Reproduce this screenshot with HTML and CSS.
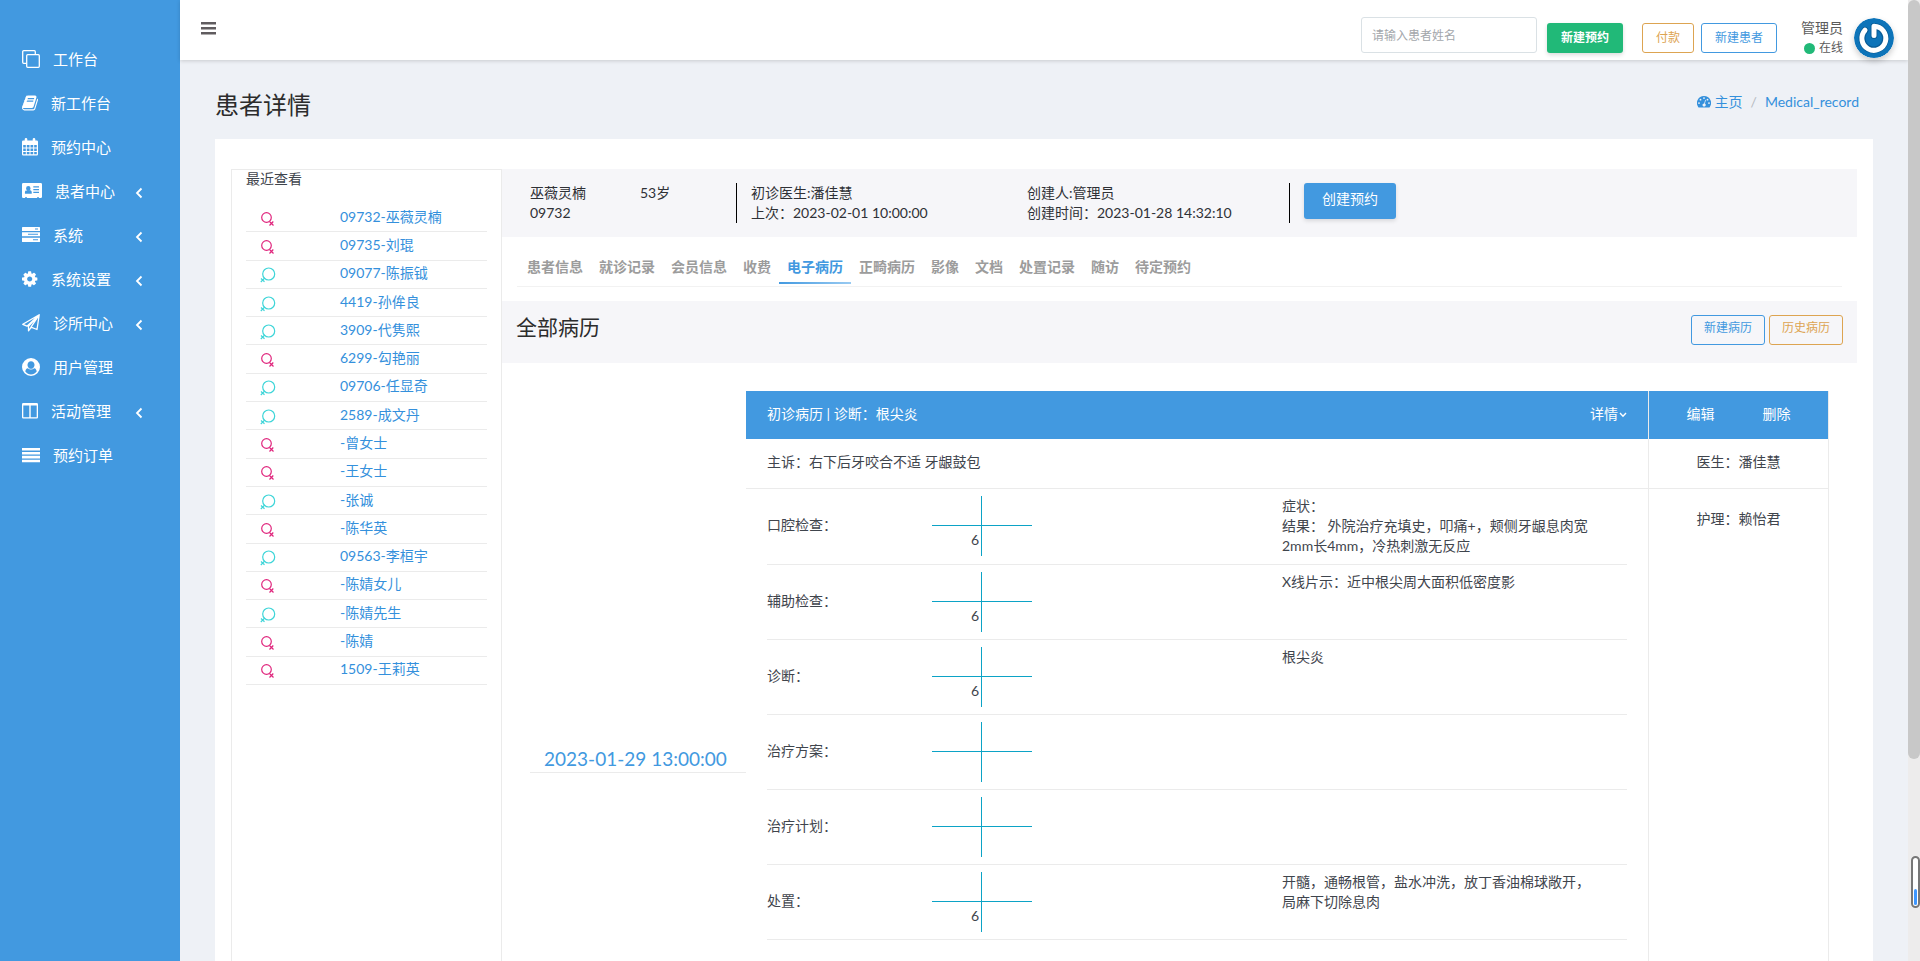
FILE: index.html
```html
<!DOCTYPE html>
<html lang="zh-CN">
<head>
<meta charset="utf-8">
<title>患者详情</title>
<link rel="stylesheet" href="styles.css">
</head>
<body>
<svg class="defs" aria-hidden="true">
  <symbol id="female" viewBox="0 0 16 16"><circle cx="6.500" cy="6.500" r="4.800"/><path d="M9.500 10.500l4 4M13.300 10.500l-3.800 4"/></symbol>
  <symbol id="male" viewBox="0 0 16 16"><circle cx="8.700" cy="7" r="6"/><path d="M4.800 10.800L.8 15M1 11.500l3.500 3.300"/></symbol>
  <symbol id="left" viewBox="0 0 8 12"><path d="M6.500 1.500L2 6l4.500 4.500"/></symbol>
</svg>
<div class="app">
  <nav class="sidebar">
    <a href="#" class="nav-item"><svg class="ico w18 line" viewBox="0 0 18 18"><rect x="4.700" y="4.700" width="12.600" height="12.600" rx="1"/><path d="M4.500 13.300H1.700a1 1 0 0 1-1-1V1.700a1 1 0 0 1 1-1h10.600a1 1 0 0 1 1 1v2.800"/></svg>工作台</a>
    <a href="#" class="nav-item"><svg class="ico w16" viewBox="64 128 1664 1536"><path d="M1703 478q40 57 18 129l-275 906q-19 64-76.500 107.500t-122.500 43.500h-923q-77 0-148.500-53.500t-99.500-131.500q-24-67-2-127 0-4 3-27t4-37q1-8-3-21.500t-3-19.500q2-11 8-21t16.500-23.500 16.500-23.500q23-38 45-91.500t30-91.500q3-10 .5-30t-.5-28q3-11 17-28t17-23q21-36 42-92t25-90q1-9-2.500-32t.5-28q4-13 22-30.500t22-22.500q19-26 42.500-84.500t27.500-96.500q1-8-3-25.500t-2-26.500q2-8 9-18t18-23 17-21q8-12 16.500-30.500t15-35 16-36 19.500-32 26.500-23.500 36-11.500 47.500 5.500l-1 3q38-9 51-9h761q74 0 114 56t18 130l-274 906q-36 119-71.500 153.500t-128.500 34.500h-869q-27 0-38 15-11 16-1 43 24 70 144 70h923q29 0 56-15.500t35-41.500l300-987q7-22 5-57 38 15 59 43zm-1064 2q-4 13 2 22.500t20 9.500h608q13 0 25.500-9.500t16.500-22.500l21-64q4-13-2-22.500t-20-9.500h-608q-13 0-25.500 9.500t-16.500 22.500zm-83 256q-4 13 2 22.500t20 9.500h608q13 0 25.500-9.500t16.500-22.500l21-64q4-13-2-22.500t-20-9.500h-608q-13 0-25.500 9.500t-16.500 22.500z"/></svg>新工作台</a>
    <a href="#" class="nav-item"><svg class="ico w16" viewBox="0 0 16 18"><path fill-rule="evenodd" d="M1.200 2.500h1.500V1.300a1.300 1.300 0 0 1 2.600 0v1.200h5.400V1.300a1.300 1.300 0 0 1 2.600 0v1.200h1.500A1.200 1.200 0 0 1 16 3.700v12.600a1.200 1.200 0 0 1-1.200 1.200H1.200A1.200 1.200 0 0 1 0 16.300V3.700a1.200 1.200 0 0 1 1.200-1.200zM1.200 7v2.500h2.600V7zM4.800 7v2.500h2.700V7zM8.500 7v2.500h2.700V7zM12.200 7v2.500h2.600V7zM1.200 10.500V13h2.600v-2.500zM4.800 10.500V13h2.700v-2.500zM8.500 10.500V13h2.700v-2.500zM12.200 10.500V13h2.600v-2.500zM1.200 14v2.300h2.600V14zM4.800 14v2.300h2.700V14zM8.500 14v2.300h2.700V14zM12.200 14v2.300h2.600V14z"/></svg>预约中心</a>
    <a href="#" class="nav-item"><svg class="ico w20" viewBox="0 0 20 16"><path fill-rule="evenodd" d="M1.300 0h17.400A1.300 1.300 0 0 1 20 1.300v12.400a1.300 1.300 0 0 1-1.300 1.300H17v-.8h-2v.8H5v-.8H3v.8H1.300A1.300 1.300 0 0 1 0 13.700V1.300A1.300 1.300 0 0 1 1.300 0zM6.300 3a2.200 2.400 0 1 0 0 4.900 2.200 2.400 0 1 0 0-4.900zM3 10.800h6.700c.4-2-.3-3.400-1.600-3.600a2.800 2.800 0 0 1-3.500 0C3.300 7.400 2.600 8.800 3 10.800zM11.300 3.300v1.200H17V3.300zM11.300 6v1.200H17V6zM11.300 8.800V10H17V8.800z"/></svg>患者中心<svg class="chev"><use href="#left"/></svg></a>
    <a href="#" class="nav-item"><svg class="ico w18" viewBox="0 0 18 16"><path fill-rule="evenodd" d="M.7 0h16.600a.7.7 0 0 1 .7.7v3.200H0V.7A.7.7 0 0 1 .7 0zM13 1.500v1h3v-1zM0 5.300h18v4H0zm6 1.500v1h10v-1zM0 10.700h18v3.700a.7.700 0 0 1-.7.700H.7a.7.700 0 0 1-.7-.7zm11 1.600v1h5v-1z"/></svg>系统<svg class="chev"><use href="#left"/></svg></a>
    <a href="#" class="nav-item"><svg class="ico w16" viewBox="128 128 1600 1536"><path d="M1152 896q0-106-75-181t-181-75-181 75-75 181 75 181 181 75 181-75 75-181zm512-109v222q0 12-8 23t-20 13l-185 28q-19 54-39 91 35 50 107 138 10 12 10 25t-9 23q-27 37-99 108t-94 71q-12 0-26-9l-138-108q-44 23-91 38-16 136-29 186-7 28-36 28h-222q-14 0-24.500-8.500t-11.500-21.500l-28-184q-49-16-90-37l-141 107q-10 9-25 9-14 0-25-11-126-114-165-168-7-10-7-23 0-12 8-23 15-21 51-66.500t54-70.500q-27-50-41-99l-183-27q-13-2-21-12.500t-8-23.500v-222q0-12 8-23t19-13l186-28q14-46 39-92-40-57-107-138-10-12-10-24 0-10 9-23 26-36 98.500-107.500t94.500-71.500q13 0 26 10l138 107q44-23 91-38 16-136 29-186 7-28 36-28h222q14 0 24.500 8.500t11.500 21.500l28 184q49 16 90 37l142-107q9-9 24-9 13 0 25 10 129 119 165 170 7 8 7 22 0 12-8 23-15 21-51 66.500t-54 70.500q26 50 41 98l183 28q13 2 21 12.500t8 23.500z"/></svg>系统设置<svg class="chev"><use href="#left"/></svg></a>
    <a href="#" class="nav-item"><svg class="ico w18 line" viewBox="0 0 18 18"><path d="M17.200.8L.8 10.300l4.200 1.900L17.200.8 15 15.500l-6-2.400L17.200.8 6.500 12.300v4.500l2.500-3.300"/></svg>诊所中心<svg class="chev"><use href="#left"/></svg></a>
    <a href="#" class="nav-item"><svg class="ico w18" viewBox="0 0 18 18"><path fill-rule="evenodd" d="M9 0a9 9 0 1 0 0 18A9 9 0 0 0 9 0zm0 3.200c2 0 3.500 1.500 3.500 3.600 0 1.300-.5 2.400-1.300 3.100-1.300 1.200-3.100 1.200-4.400 0-.8-.7-1.300-1.800-1.300-3.100 0-2.100 1.500-3.600 3.500-3.600zm-5.700 10.400c.3-1.900 1.100-3.100 2.500-3.300 1.900 1.700 4.500 1.700 6.400 0 1.400.2 2.200 1.400 2.500 3.300-3 4-8.400 4-11.400 0z"/></svg>用户管理</a>
    <a href="#" class="nav-item"><svg class="ico w16" viewBox="0 0 16 16"><path fill-rule="evenodd" d="M1.300 0h13.400A1.300 1.300 0 0 1 16 1.300v12.900a1.300 1.300 0 0 1-1.300 1.300H1.300A1.300 1.300 0 0 1 0 14.200V1.300A1.300 1.300 0 0 1 1.300 0zM1.300 2.500v11.700h6V2.500zM8.700 2.500v11.700h6V2.500z"/></svg>活动管理<svg class="chev"><use href="#left"/></svg></a>
    <a href="#" class="nav-item"><svg class="ico w18" viewBox="0 0 18 16"><path d="M0 1h18v2.600H0zM0 4.900h18v2.600H0zM0 8.800h18v2.600H0zM0 12.700h18v2.600H0z"/></svg>预约订单</a>
  </nav>

  <div class="main">
    <header class="topbar">
      <button class="menu" aria-label="菜单"><svg width="15" height="13" viewBox="0 0 15 13"><path d="M0 0h15v2.400H0zM0 5h15v2.400H0zM0 10h15v2.400H0z"/></svg></button>
      <div class="actions">
        <input class="search" type="text" placeholder="请输入患者姓名" aria-label="请输入患者姓名">
        <button class="btn green">新建预约</button>
        <button class="btn outline-orange pay">付款</button>
        <button class="btn outline-blue">新建患者</button>
      </div>
      <div class="user">
        <div class="user-text"><span class="user-name">管理员</span><span class="status"><i class="dot"></i>在线</span></div>
        <svg class="avatar" viewBox="0 0 40 40"><circle cx="20" cy="20" r="20" fill="#0d74b9"/><path d="M20 17.500V8.500A11.700 11.700 0 1 1 11 12.500" fill="none" stroke="#0a5d97" stroke-width="7" stroke-linecap="round" stroke-linejoin="round"/><path d="M20 17.500V8.300A12 12 0 1 1 11 12.200" fill="none" stroke="#fff" stroke-width="5" stroke-linecap="round" stroke-linejoin="round"/></svg>
      </div>
    </header>

    <div class="page-head">
      <h1>患者详情</h1>
      <div class="crumbs">
        <a href="#"><svg width="14" height="12" viewBox="0 0 14 12"><path fill-rule="evenodd" d="M7 0a7 7 0 0 0-5.800 11q.3.500.8.500h10q.5 0 .8-.5A7 7 0 0 0 7 0zM2 6.200a.9.900 0 1 1 0 1.800.9.900 0 0 1 0-1.800zM3.500 2.800a.9.900 0 1 1 0 1.800.9.900 0 0 1 0-1.800zM7 1.200a.9.900 0 1 1 0 1.800.9.900 0 0 1 0-1.800zM10.500 2.800a.9.900 0 1 1 0 1.800.9.900 0 0 1 0-1.800zM12 6.200a.9.900 0 1 1 0 1.800.9.900 0 0 1 0-1.800zM8.200 3.800l.7.200-1 3.600a1.600 1.600 0 1 1-.7-.2z"/></svg> 主页</a>
        <span class="slash">/</span>
        <a href="#">Medical_record</a>
      </div>
    </div>

    <main class="card">
      <aside class="recent">
        <h2>最近查看</h2>
        <ul>
          <li><svg class="f"><use href="#female"/></svg><a href="#">09732-巫薇灵楠</a></li>
          <li><svg class="f"><use href="#female"/></svg><a href="#">09735-刘琨</a></li>
          <li><svg class="m"><use href="#male"/></svg><a href="#">09077-陈振钺</a></li>
          <li><svg class="m"><use href="#male"/></svg><a href="#">4419-孙侔良</a></li>
          <li><svg class="m"><use href="#male"/></svg><a href="#">3909-代隽熙</a></li>
          <li><svg class="f"><use href="#female"/></svg><a href="#">6299-勾艳丽</a></li>
          <li><svg class="m"><use href="#male"/></svg><a href="#">09706-任显奇</a></li>
          <li><svg class="m"><use href="#male"/></svg><a href="#">2589-成文丹</a></li>
          <li><svg class="f"><use href="#female"/></svg><a href="#">-曾女士</a></li>
          <li><svg class="f"><use href="#female"/></svg><a href="#">-王女士</a></li>
          <li><svg class="m"><use href="#male"/></svg><a href="#">-张诚</a></li>
          <li><svg class="f"><use href="#female"/></svg><a href="#">-陈华英</a></li>
          <li><svg class="m"><use href="#male"/></svg><a href="#">09563-李桓宇</a></li>
          <li><svg class="f"><use href="#female"/></svg><a href="#">-陈婧女儿</a></li>
          <li><svg class="m"><use href="#male"/></svg><a href="#">-陈婧先生</a></li>
          <li><svg class="f"><use href="#female"/></svg><a href="#">-陈婧</a></li>
          <li><svg class="f"><use href="#female"/></svg><a href="#">1509-王莉英</a></li>
        </ul>
      </aside>

      <section class="detail">
        <div class="info">
          <div class="who"><div>巫薇灵楠<br>09732</div><div>53岁</div></div>
          <div class="visit"><div>初诊医生:潘佳慧<br>上次：2023-02-01 10:00:00</div><div>创建人:管理员<br>创建时间：2023-01-28 14:32:10</div></div>
          <div class="book"><button class="btn primary">创建预约</button></div>
        </div>
        <nav class="tabs">
          <a href="#">患者信息</a><a href="#">就诊记录</a><a href="#">会员信息</a><a href="#">收费</a><a href="#" class="active">电子病历</a><a href="#">正畸病历</a><a href="#">影像</a><a href="#">文档</a><a href="#">处置记录</a><a href="#">随访</a><a href="#">待定预约</a>
        </nav>
        <div class="band">
          <h2>全部病历</h2>
          <div class="band-actions"><button class="btn outline-blue">新建病历</button><button class="btn outline-orange">历史病历</button></div>
        </div>

        <div class="record">
          <div class="when">2023-01-29 13:00:00</div>
          <div class="chart">
            <div class="bar"><span>初诊病历 | 诊断：根尖炎</span><a href="#">详情<svg width="8" height="6" viewBox="0 0 8 6"><path d="M1 1l3 3.200L7 1"/></svg></a></div>
            <div class="complaint">主诉：右下后牙咬合不适 牙龈鼓包</div>
            <div class="rows">
              <div class="row"><span class="label">口腔检查：</span><div class="tooth"><i></i><i></i><i>6</i><i></i></div><p>症状：<br>结果： 外院治疗充填史，叩痛+，颊侧牙龈息肉宽2mm长4mm，冷热刺激无反应</p></div>
              <div class="row"><span class="label">辅助检查：</span><div class="tooth"><i></i><i></i><i>6</i><i></i></div><p>X线片示：近中根尖周大面积低密度影</p></div>
              <div class="row"><span class="label">诊断：</span><div class="tooth"><i></i><i></i><i>6</i><i></i></div><p>根尖炎</p></div>
              <div class="row"><span class="label">治疗方案：</span><div class="tooth"><i></i><i></i><i></i><i></i></div><p></p></div>
              <div class="row"><span class="label">治疗计划：</span><div class="tooth"><i></i><i></i><i></i><i></i></div><p></p></div>
              <div class="row"><span class="label">处置：</span><div class="tooth"><i></i><i></i><i>6</i><i></i></div><p>开髓，通畅根管，盐水冲洗，放丁香油棉球敞开，局麻下切除息肉</p></div>
            </div>
          </div>
          <div class="staff">
            <div class="bar ops"><a href="#">编辑</a><a href="#">删除</a></div>
            <div class="doctor">医生：潘佳慧</div>
            <div class="nurse">护理：赖怡君</div>
          </div>
        </div>
      </section>
    </main>
  </div>
  <div class="scroll"><div class="thumb"></div><div class="gauge"><i></i></div></div>
</div>
</body>
</html>
```
FILE: styles.css
```css
* { box-sizing: border-box; }
body {
  margin: 0;
  font: 14px/20px Lato, "Noto Sans CJK SC", sans-serif;
  color: #3f454d;
  background: #eef1f6;
}
a { color: #3490dc; text-decoration: none; }
h1, h2, p, ul { margin: 0; padding: 0; font-weight: 400; }
i { font-style: normal; }
.defs { position: absolute; width: 0; height: 0; }

.app { display: flex; height: 100vh; overflow: hidden; }

/* sidebar */
.sidebar { flex: 0 0 180px; padding-top: 38px; background: #4299e0; }
.nav-item {
  display: flex;
  align-items: center;
  gap: 13px;
  height: 44px;
  padding: 0 37px 2px 22px;
  font-size: 15px;
  color: #fff;
}
.ico { height: 18px; fill: #fff; }
.ico.line { fill: none; stroke: #fff; stroke-width: 1.3; stroke-linejoin: round; }
.w16 { width: 16px; }
.w18 { width: 18px; }
.w20 { width: 20px; }
.chev { width: 8px; height: 12px; margin: 4px 0 0 auto; fill: none; stroke: #fff; stroke-width: 1.8; }

/* top bar */
.main { flex: 1; min-width: 0; }
.topbar {
  display: flex;
  align-items: center;
  height: 60px;
  padding: 0 14px 0 21px;
  background: #fff;
  box-shadow: 0 1px 4px rgba(0, 0, 0, .16);
}
.menu { display: flex; padding: 0; border: 0; background: none; margin-bottom: 4px; fill: #605c5f; }
.actions { display: flex; align-items: flex-end; margin-left: auto; padding-top: 10px; }
.search {
  width: 176px;
  height: 36px;
  padding: 0 10px;
  border: 1px solid #dae1e5;
  border-radius: 3px;
  font: inherit;
  font-size: 12px;
}
.search::placeholder { color: #a3a7ab; opacity: 1; }
.btn {
  height: 30px;
  padding: 0 13px;
  border: 1px solid transparent;
  border-radius: 3px;
  font: inherit;
  font-size: 12px;
  background: none;
  white-space: nowrap;
}
.green { margin: 0 19px 0 10px; background: #21b978; color: #fff; font-weight: 700; box-shadow: 0 2px 4px rgba(0, 0, 0, .14); }
.outline-orange { border-color: #dda451; color: #dda451; }
.outline-blue { border-color: #4299e0; color: #4299e0; }
.pay { margin-right: 7px; }
.user { display: flex; align-items: center; gap: 11px; margin-left: 24px; }
.user-text { display: flex; flex-direction: column; align-items: flex-end; margin-top: 16px; color: #5b5b5b; }
.status { display: flex; align-items: center; gap: 4px; font-size: 12px; }
.dot { width: 11px; height: 11px; border-radius: 50%; background: #21b978; }
.avatar { width: 40px; height: 40px; margin-top: 16px; border-radius: 50%; box-shadow: 0 3px 6px rgba(0, 0, 0, .2); }

/* page heading */
.page-head { display: flex; align-items: center; justify-content: space-between; height: 79px; padding: 10px 49px 0 35px; }
h1 { font-size: 24px; line-height: 32px; color: #2c2c2c; }
.crumbs { display: flex; gap: 8px; padding-bottom: 6px; }
.crumbs svg { fill: #3490dc; vertical-align: -1px; }
.slash { color: #b5bac0; }

/* card */
.card { display: flex; margin: 0 35px; padding: 30px 16px 0; background: #fff; min-height: 100vh; }
.recent { flex: 0 0 271px; padding: 0 14px; border: 1px solid #ebebeb; }
.recent h2 { font-size: 14px; line-height: 18px; }
.recent ul { display: grid; grid-auto-rows: 1fr; min-height: 481px; margin-top: 16px; list-style: none; }
.recent li { display: flex; align-items: center; padding-bottom: 2px; border-bottom: 1px solid #ebebeb; }
.recent li svg { width: 16px; height: 16px; margin: 4px 64px 0 14px; fill: none; }
.f { stroke: #e0267d; stroke-width: 1.2; }
.m { stroke: #3dd5d8; stroke-width: 1.2; }

.detail { flex: 1; min-width: 0; }
.info { display: flex; padding: 14px 28px; background: #f6f6f9; color: #2f3136; }
.who { display: flex; flex: 0 0 206px; height: 40px; }
.who div { flex: 0 0 110px; }
.who div + div { flex: 1; }
.visit { display: grid; grid-template-columns: 276px 1fr; flex: 0 0 554px; padding-left: 14px; border: solid #000; border-width: 0 1px; }
.book { padding-left: 14px; }
.primary { height: 36px; padding: 0 17px 4px; font-size: 14px; color: #fff; background: #4299e0; box-shadow: 0 2px 4px rgba(0, 0, 0, .12); }

.tabs { display: flex; margin: 14px 15px 14px; border-bottom: 1px solid #f2f2f2; padding: 0 2px 2px; }
.tabs a { padding: 6px 8px; height: 33px; font-weight: 700; color: #9c9c9c; border-bottom: 2px solid transparent; }
.tabs .active { color: #4299e0; border-image: linear-gradient(90deg, #4299e0, #9acbf2) 1; }

.band { display: flex; justify-content: space-between; height: 62px; padding: 14px; background: #f6f6f9; }
.band h2 { font-size: 21px; line-height: 24px; color: #2c2c2c; }
.band-actions { display: flex; gap: 4px; }
.band-actions .btn { padding: 0 12px 4px; }

/* medical record */
.record { display: flex; min-height: 737px; margin: 28px 28px 0; }
.when { flex: 0 0 216px; align-self: center; padding: 0 14px; border-bottom: 1px solid #ebebeb; font-size: 19px; line-height: 26px; color: #4299e0; }
.chart { flex: 1; border-right: 1px solid #ebebeb; }
.bar { display: flex; justify-content: space-between; align-items: center; height: 48px; padding: 0 21px 2px; background: #4299e0; color: #fff; }
.bar a { color: #fff; }
.bar svg { fill: none; stroke: #fff; stroke-width: 1.4; vertical-align: 1px; margin-left: 1px; }
.complaint, .doctor { height: 50px; border-bottom: 1px solid #ebebeb; line-height: 46px; }
.complaint { padding: 0 21px; }
.rows { padding: 0 21px; }
.row { display: grid; grid-template-columns: 165px 350px 1fr; align-items: center; padding: 7px 0; border-bottom: 1px solid #ebebeb; }
.row:first-child { padding-bottom: 8px; }
.label { padding-bottom: 3px; }
.row p { align-self: start; padding-right: 28px; }
.tooth { display: grid; grid-template-columns: 50px 50px; grid-template-rows: 30px 30px; }
.tooth i { padding: 4px 2px 0; text-align: right; line-height: 20px; }
.tooth i:nth-child(odd) { border-right: 1px solid #0ca3c6; }
.tooth i:nth-child(-n+2) { border-bottom: 1px solid #0ca3c6; }
.staff { flex: 0 0 180px; border-right: 1px solid #ebebeb; text-align: center; }
.ops { justify-content: center; gap: 48px; }
.nurse { padding-top: 20px; }

/* page scroll track */
.scroll { position: relative; flex: 0 0 12px; background: #edecec; }
.thumb { height: 79%; border-radius: 6px; background: #c8c8c8; }
.gauge { position: absolute; right: 0; bottom: 53px; display: flex; align-items: flex-end; width: 9px; height: 52px; padding: 1px; border: 2px solid #777; border-radius: 5px; background: #fff; }
.gauge i { width: 100%; height: 16px; border-radius: 2px; background: #3e97ff; }
```
